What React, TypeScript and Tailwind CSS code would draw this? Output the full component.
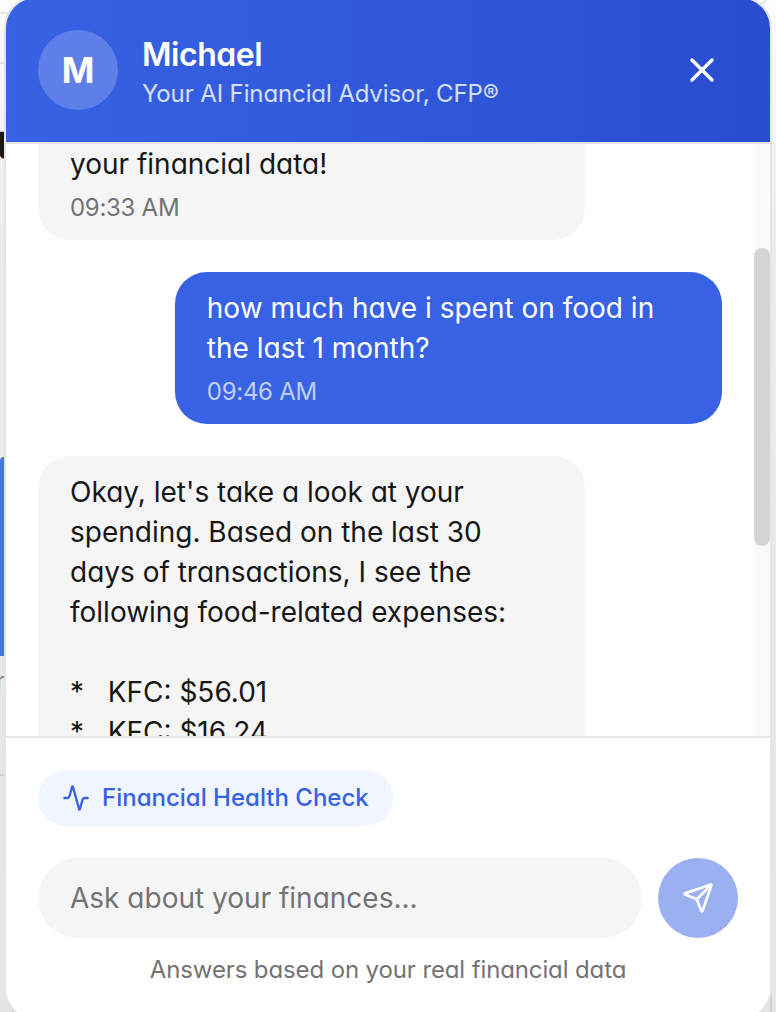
import { Activity, Send, X } from 'lucide-react';

interface Message {
  id: number;
  sender: 'user' | 'advisor';
  text: string;
  time?: string;
}

const messages: Message[] = [
  { id: 1, sender: 'advisor', text: '\nyour financial data!', time: '09:33 AM' },
  { id: 2, sender: 'user', text: 'how much have i spent on food in the last 1 month?', time: '09:46 AM' },
  {
    id: 3,
    sender: 'advisor',
    text: "Okay, let's take a look at your spending. Based on the last 30 days of transactions, I see the following food-related expenses:\n\n*   KFC: $56.01\n*   KFC: $16.24",
  },
];

function ChatHeader() {
  return (
    <div className="flex h-[146px] shrink-0 items-center justify-between border-b-2 border-[#e5e5e5] bg-gradient-to-r from-[#3762e4] to-[#2a4dd0] px-8">
      <div className="flex items-center gap-6">
        <div className="flex h-20 w-20 items-center justify-center rounded-full bg-white/20 text-[35px] font-bold text-white [font-variation-settings:'opsz'_18]">
          M
        </div>
        <div className="pt-2">
          <h3 className="text-[32px] leading-10 font-semibold tracking-[-0.014em] text-white [font-variation-settings:'opsz'_16]">
            Michael
          </h3>
          <p className="text-2xl leading-[38px] tracking-[-0.005em] text-white/80">Your AI Financial Advisor, CFP®</p>
        </div>
      </div>
      <button className="flex h-[72px] w-[72px] items-center justify-center text-white">
        <X size={40} />
      </button>
    </div>
  );
}

function MessageBubble({ message }: { message: Message }) {
  const isUser = message.sender === 'user';

  return (
    <div className={`flex ${isUser ? 'justify-end' : 'justify-start'}`}>
      <div
        className={`w-4/5 rounded-[32px] px-8 py-4 ${
          isUser ? 'bg-[#3762e4] text-white' : 'bg-[#f5f5f5] text-[#171717]'
        }`}
      >
        <p className="text-[28px] leading-10 whitespace-pre-wrap">{message.text}</p>
        {message.time && (
          <p className={`mt-2 text-2xl leading-8 tracking-[-0.012em] ${isUser ? 'text-white/70' : 'text-[#737373]'}`}>
            {message.time}
          </p>
        )}
      </div>
    </div>
  );
}

function ChatFooter() {
  return (
    <div className="shrink-0 border-t-2 border-[#e5e5e5] bg-white p-8">
      <button className="flex h-14 items-center gap-3 rounded-full bg-[#f0f5ff] px-6 text-2xl font-medium text-[#3762e4]">
        <Activity size={28} />
        Financial Health Check
      </button>
      <div className="mt-8 flex items-center gap-4">
        <input
          className="h-20 min-w-0 flex-1 rounded-full bg-[#f5f5f5] px-8 text-[28px] outline-none placeholder:text-[#737373]"
          placeholder="Ask about your finances..."
        />
        <button className="flex h-20 w-20 shrink-0 items-center justify-center rounded-full bg-[#9bb0f1] text-white">
          <Send size={32} />
        </button>
      </div>
      <p className="mt-4 text-center text-2xl leading-8 tracking-[-0.005em] text-[#737373]">
        Answers based on your real financial data
      </p>
    </div>
  );
}

// Sliver of the dashboard that stays visible beside the chat window
function PageBehind() {
  return (
    <div className="absolute inset-0 bg-gradient-to-b from-[#fcfcfc] via-[#ebebeb] via-25% to-[#e5e5e5]">
      <div className="absolute top-3 left-0 h-[2px] w-10 bg-[#e8e8e8]" />
      <div className="absolute top-[62px] left-0 h-[2px] w-1 bg-[#e2e2e2]" />
      <span className="absolute top-[117px] -left-[4px] text-[40px] leading-[56px] font-semibold text-[#171717]">t</span>
      <div className="absolute top-[457px] left-0 h-[199px] w-1 rounded-tl-sm bg-[#4777dc]" />
      <span className="absolute top-[665px] -left-[4px] text-2xl leading-8 text-[#858591]">r</span>
      <div className="absolute top-[774px] left-0 h-[2px] w-1 bg-[#d0d0d0]" />
      <div className="absolute top-[1004px] left-3 h-2 w-[2px] bg-[#d0d0d0]" />
      <div className="absolute -top-5 right-0 h-7 w-7 rounded-br-full border-r-2 border-b-2 border-[#e2e2e2]" />
      <div className="absolute top-[984px] right-1 h-7 w-[2px] bg-[#d0d0d0]" />
    </div>
  );
}

export default function App() {
  return (
    <div className="relative h-[1012px] w-[776px] overflow-hidden font-[Inter,sans-serif] [font-feature-settings:'cv11'] [font-optical-sizing:none]">
      <PageBehind />
      <div className="relative -mt-1 ml-1 flex h-[1024px] w-[768px] flex-col overflow-hidden rounded-[32px] border-2 border-[#e5e5e5] bg-white">
        <ChatHeader />
        <div className="flex min-h-0 flex-1">
          <div className="flex min-h-0 flex-1 flex-col justify-start overflow-hidden px-8">
            {/* scrolled so the first message is cut by the header */}
            <div className="-mt-14 space-y-8">
              {messages.map((message) => (
                <MessageBubble key={message.id} message={message} />
              ))}
            </div>
          </div>
          <div className="w-4 shrink-0 bg-[#fafafa] pt-[104px]">
            <div className="h-[298px] rounded-full bg-[#d4d4d4]" />
          </div>
        </div>
        <ChatFooter />
      </div>
    </div>
  );
}
